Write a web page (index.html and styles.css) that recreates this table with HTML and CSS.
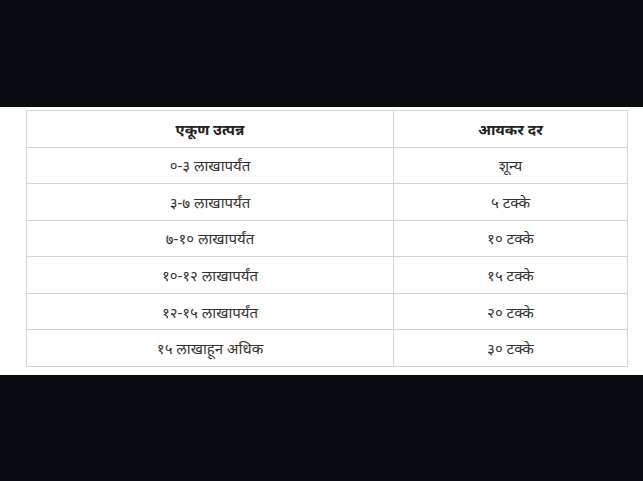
FILE: index.html
```html
<!DOCTYPE html>
<html lang="mr">
<head>
<meta charset="utf-8">
<title>आयकर दर</title>
<link rel="stylesheet" href="styles.css">
</head>
<body>
<div class="band">
  <table class="tax">
    <thead>
      <tr><th>एकूण उत्पन्न</th><th>आयकर दर</th></tr>
    </thead>
    <tbody>
      <tr class="first"><td>०-३ लाखापर्यंत</td><td>शून्य</td></tr>
      <tr><td>३-७ लाखापर्यंत</td><td>५ टक्के</td></tr>
      <tr><td>७-१० लाखापर्यंत</td><td>१० टक्के</td></tr>
      <tr><td>१०-१२ लाखापर्यंत</td><td>१५ टक्के</td></tr>
      <tr><td>१२-१५ लाखापर्यंत</td><td>२० टक्के</td></tr>
      <tr><td>१५ लाखाहून अधिक</td><td>३० टक्के</td></tr>
    </tbody>
  </table>
</div>
</body>
</html>
```
FILE: styles.css
```css
html, body {
  margin: 0;
  padding: 0;
  background: #080b12;
  height: 100%;
}
body {
  font-family: "Noto Sans", "Noto Sans Devanagari", sans-serif;
  color: #333;
}
.band {
  margin-top: 107px;
  background: #fff;
  padding: 3px 16px 8px 26px;
}
.tax {
  border-collapse: collapse;
  width: 602px;
  table-layout: fixed;
  font-size: 15px;
  line-height: 18px;
}
.tax tr {
  height: 36.57px;
}
.tax th, .tax td {
  border: 1px solid #d4d4d4;
  text-align: center;
  padding: 0;
}
.tax th:first-child, .tax td:first-child {
  width: 366px;
}
.tax th {
  font-weight: bold;
  color: #222;
}
.tax tr.first td {
  border-bottom-color: #dcd3c6;
}
```
